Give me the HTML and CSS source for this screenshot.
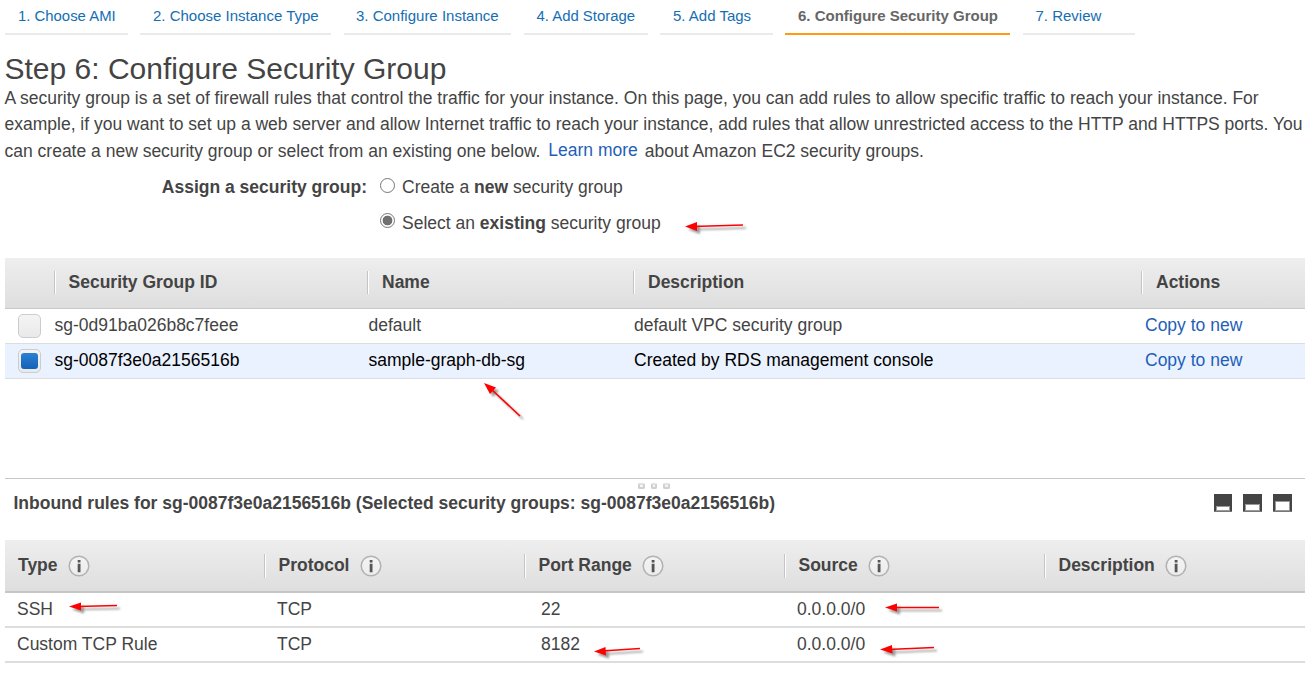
FILE: index.html
```html
<!DOCTYPE html>
<html lang="en">
<head>
<meta charset="utf-8">
<title>Configure Security Group</title>
<link rel="stylesheet" href="styles.css">
</head>
<body>
<svg class="defs" width="0" height="0" aria-hidden="true">
  <defs>
    <linearGradient id="disc" x1="0" y1="0" x2="0" y2="1"><stop offset="0" stop-color="#f4f4f4"/><stop offset="1" stop-color="#ececec"/></linearGradient>
    <symbol id="info" viewBox="0 0 22 22">
      <circle cx="11" cy="11" r="9.8" fill="url(#disc)" stroke="#b2b2b2" stroke-width="1.5"/>
      <path d="M9.7 5h2.8v2.6H9.700zM9.700 8.800h2.800v8.400H9.700z" fill="#555"/>
    </symbol>
  </defs>
</svg>
<nav class="steps">
  <a class="step s1">1. Choose AMI</a>
  <a class="step s2">2. Choose Instance Type</a>
  <a class="step s3">3. Configure Instance</a>
  <a class="step s4">4. Add Storage</a>
  <a class="step s5">5. Add Tags</a>
  <a class="step s6 current">6. Configure Security Group</a>
  <a class="step s7">7. Review</a>
</nav>
<main>
  <h1>Step 6: Configure Security Group</h1>
  <p class="intro">
    <span class="line l1">A security group is a set of firewall rules that control the traffic for your instance. On this page, you can add rules to allow specific traffic to reach your instance. For</span>
    <span class="line l2">example, if you want to set up a web server and allow Internet traffic to reach your instance, add rules that allow unrestricted access to the HTTP and HTTPS ports. You</span>
    <span class="line l3">can create a new security group or select from an existing one below. <a class="learn">Learn more</a> about Amazon EC2 security groups.</span>
  </p>
  <div class="assign">
    <div class="assign-label">Assign a security group:</div>
    <div class="options">
      <label class="option"><i class="radio"></i><span>Create a <b>new</b> security group</span></label>
      <label class="option"><i class="radio on"></i><span>Select an <b>existing</b> security group</span></label>
    </div>
  </div>
  <section class="groups">
    <div class="row head"><span></span><span>Security Group ID</span><span>Name</span><span>Description</span><span>Actions</span></div>
    <div class="row"><i class="check"></i><span>sg-0d91ba026b8c7feee</span><span>default</span><span>default VPC security group</span><a>Copy to new</a></div>
    <div class="row selected"><i class="check on"></i><span>sg-0087f3e0a2156516b</span><span>sample-graph-db-sg</span><span>Created by RDS management console</span><a>Copy to new</a></div>
  </section>
  <section class="detail">
    <div class="grip"><i></i><i></i><i></i></div>
    <div class="detail-bar">
      <h2>Inbound rules for sg-0087f3e0a2156516b (Selected security groups: sg-0087f3e0a2156516b)</h2>
      <div class="panes"><i class="pane low"></i><i class="pane mid"></i><i class="pane high"></i></div>
    </div>
    <div class="rules">
      <div class="rule head">
        <span>Type<svg><use href="#info"/></svg></span>
        <span>Protocol<svg><use href="#info"/></svg></span>
        <span>Port Range<svg><use href="#info"/></svg></span>
        <span>Source<svg><use href="#info"/></svg></span>
        <span>Description<svg><use href="#info"/></svg></span>
      </div>
      <div class="rule"><span>SSH</span><span>TCP</span><span class="port">22</span><span>0.0.0.0/0</span><span></span></div>
      <div class="rule"><span>Custom TCP Rule</span><span>TCP</span><span class="port">8182</span><span>0.0.0.0/0</span><span></span></div>
    </div>
  </section>
</main>
<svg class="marks" viewBox="0 0 1314 690" aria-hidden="true">
  <g class="mark"><path d="M693 226.500L743 225"/><polygon points="685,226.500 697,222 697,231"/></g>
  <g class="mark"><path d="M490 388L520 416"/><polygon points="484,383 496,387.500 490,394"/></g>
  <g class="mark"><path d="M77 606.500L117 605.500"/><polygon points="69,606.500 81,602.500 81,610.500"/></g>
  <g class="mark"><path d="M893 607.500H939"/><polygon points="885,607.500 897,603.500 897,611.500"/></g>
  <g class="mark"><path d="M602 651L640 648.500"/><polygon points="594,651.500 605.500,647 606,655.500"/></g>
  <g class="mark"><path d="M888 649.500L934 647.500"/><polygon points="880,649.500 892,645 892.500,653.500"/></g>
</svg>
</body>
</html>
```
FILE: styles.css
```css
* { box-sizing: border-box; }
body {
  margin: 0;
  width: 1314px;
  height: 690px;
  overflow: hidden;
  position: relative;
  background: #fff;
  color: #444;
  font: 17.5px/26.4px "Liberation Sans", Arial, sans-serif;
  white-space: nowrap;
}
.defs { position: absolute; }
a { color: #1f5fb8; }

.steps { display: flex; height: 35px; padding-left: 5px; font-size: 14.9px; }
.step { height: 35px; padding-left: 13px; line-height: 32px; border-bottom: 2px solid #eaeaea; color: #146eb4; }
.s1 { width: 123px; margin-right: 12px; }
.s2 { width: 191px; margin-right: 13px; font-size: 15px; }
.s3 { width: 167px; margin-right: 13px; padding-left: 12px; font-size: 15px; }
.s4 { width: 124px; margin-right: 12px; padding-left: 12.5px; }
.s5 { width: 113px; margin-right: 12px; font-size: 15px; }
.s6 { width: 225px; margin-right: 13px; font-size: 15px; }
.s7 { width: 112px; padding-left: 12.5px; font-size: 15px; }
.step.current { color: #666; font-weight: bold; border-color: #ff9b0f; }

main { padding: 0 9px 0 5px; }
h1 { margin: 0 0 0 -0.500px; padding-top: 17px; font-size: 30px; line-height: 33px; font-weight: normal; }
.intro { margin: 0 0 0 -0.500px; height: 84px; }
.line { display: block; }
.l2 { line-height: 26px; }
.l3 { line-height: 29px; }
.learn { display: inline-block; margin: 0 2px 0 3px; line-height: 25px; vertical-align: 1px; }

.assign { display: flex; height: 89px; padding-top: 5px; line-height: 26px; }
.assign-label { width: 362px; text-align: right; font-weight: bold; }
.options { display: flex; flex-direction: column; gap: 10px; margin-left: 13px; }
.option { display: flex; gap: 7px; }
.radio { width: 15px; height: 15px; margin-top: 4px; border: 1.5px solid #767676; border-radius: 50%; }
.radio.on { background: radial-gradient(circle, #707070 0 4.600px, #fff 5.200px); }
.option:nth-child(2) .radio { margin-top: 3px; }

.row { display: grid; grid-template-columns: 49px 314px 265px 511px 1fr; height: 35px; line-height: 32px; border-bottom: 1px solid #ddd; }
.row.head { grid-template-columns: 49px 313px 266px 508px 1fr; height: 51px; line-height: 49px; }
.head { background: linear-gradient(#eee, #dedede); border-color: #c8c8c8; font-size: 17.5px; font-weight: bold; align-items: start; }
.row.head span + span, .rule.head span + span {
  background: linear-gradient(90deg, #c4c4c4 1px, #fff 1px) 0 13px / 2px 23px no-repeat;
}
.row > span, .row > a { padding-left: 0.500px; }
.row > span:nth-child(4) { padding-left: 1px; }
.row.head span { padding-left: 14.500px; height: 50px; }
.row.head > span:nth-child(n+3) { padding-left: 15px; }
.selected { background: #eaf2ff; color: #000; }
.row > a { padding-left: 1px; }
.check { width: 23px; height: 24px; margin: 5px 0 0 13px; border: 1px solid #ccc; border-radius: 5px; background: linear-gradient(#f4f4f4, #e9e9e9); }
.check.on { padding: 3px 2px; }
.check.on::before { content: ""; display: block; height: 16px; border-radius: 3px; background: linear-gradient(#2c80d2, #1462ba); }

.detail { margin-top: 99px; border-top: 1px solid #c8c8c8; }
.grip { display: flex; justify-content: center; gap: 6px; height: 10px; padding: 4px 2px 0 0; }
.grip i { width: 6.500px; height: 6px; border: 2px solid #d0d0d0; border-top-color: #e2e2e2; border-radius: 2px; background: #f4f4f4; }
.detail-bar { display: flex; justify-content: space-between; height: 51px; padding: 0 13px 0 8.500px; }
h2 { margin: 0; font-size: 17.5px; line-height: 29px; }
.panes { display: flex; gap: 11px; padding-top: 5px; }
.pane { width: 19px; height: 18px; padding: 13px 3px 2px; background: #444; border-bottom: 1px solid #777; }
.pane::before { content: ""; display: block; height: 2px; background: #fff; outline: 1px solid #999; }
.low { width: 18px; }
.low::before { height: 2.500px; }
.mid { padding-top: 11px; }
.mid::before { height: 4.500px; }
.high { padding-top: 8px; }
.high::before { height: 7.500px; }

.rule { display: grid; grid-template-columns: repeat(5, 260px); height: 35px; line-height: 32px; border-bottom: 2px solid #ddd; }
.rule.head { height: 53px; line-height: 51px; border-color: #c6c6c6; }
.rule span { padding-left: 12px; }
.rule.head span { display: flex; height: 51px; padding-left: 13px; }
.rule.head span + span { padding-left: 14.500px; margin-left: -1px; background-position: 0 14px; background-size: 2px 24px; }
.rule .port { padding-left: 16px; }
.rule svg { width: 22px; height: 22px; margin: 15px 0 0 10.500px; }

.marks { position: absolute; top: 0; left: 0; width: 1314px; height: 690px; pointer-events: none; }
.mark { fill: #f00; stroke: none; filter: drop-shadow(3px 3px 1px rgba(0, 0, 0, .4)); }
.mark path { stroke: #f00; stroke-width: 1.600px; }
```
